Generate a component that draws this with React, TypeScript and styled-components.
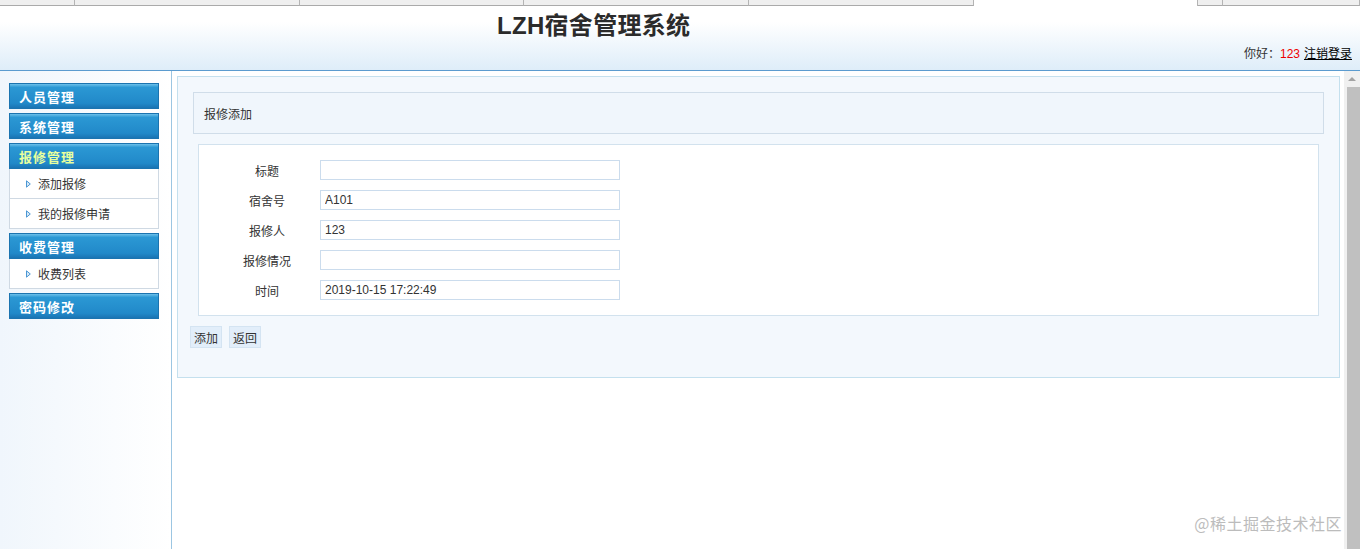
import React from "react";
import styled, { createGlobalStyle } from "styled-components";

const Global = createGlobalStyle`
  html, body { margin: 0; padding: 0; height: 100%; overflow: hidden; }
  body { font-family: "Liberation Sans", "Noto Sans CJK SC", sans-serif; font-size: 12px; color: #333; background: #fff; }
  #root { height: 549px; }
  * { box-sizing: border-box; }
`;

const Page = styled.div`
  height: 549px;
  display: flex;
  flex-direction: column;
  position: relative;
`;

const TabStrip = styled.div`
  display: flex;
  height: 6px;
  flex: none;
`;

const Tab = styled.div<{ $w: number; $active?: boolean }>`
  width: ${(p) => p.$w}px;
  flex: none;
  background: ${(p) => (p.$active ? "#fff" : "#efefef")};
  border-right: 1px solid #b4b4b4;
  border-bottom: ${(p) => (p.$active ? "none" : "1px solid #aaa")};
`;

const Header = styled.header`
  height: 65px;
  flex: none;
  background: linear-gradient(to bottom, #ffffff 25%, #deedf9 100%);
  border-bottom: 1px solid #5b9bcf;
  position: relative;
  display: flex;
  flex-direction: column;
`;

const Title = styled.h1`
  margin: 0;
  padding: 4px 0 0 497px;
  font-family: "Liberation Sans", "Noto Sans CJK SC", sans-serif;
  font-size: 24px;
  font-weight: bold;
  color: #2b2b2b;
  line-height: 32px;
  letter-spacing: 0.3px;
`;

const UserBar = styled.div`
  margin-top: auto;
  padding: 0 8px 8px 0;
  text-align: right;
  font-family: "Noto Sans CJK SC", sans-serif;
  font-size: 12px;
  line-height: 16px;
  color: #333;
`;

const Red = styled.span`
  color: #e00;
  font-family: "Liberation Sans", sans-serif;
`;

const Logout = styled.a`
  color: #000;
  text-decoration: underline;
  margin-left: 4px;
`;

const Body = styled.div`
  flex: 1;
  display: flex;
  min-height: 0;
`;

const Sidebar = styled.nav`
  width: 172px;
  flex: none;
  background: linear-gradient(to right, #f0f6fc, #ffffff);
  border-right: 1px solid #9cc6e2;
  padding: 12px 0 0 9px;
  display: flex;
  flex-direction: column;
`;

const Group = styled.div`
  width: 150px;
  margin-bottom: 4px;
`;

const GroupHead = styled.div<{ $active?: boolean }>`
  height: 26px;
  background: linear-gradient(to bottom, #6cc0ea 0%, #2b98d4 14%, #2189c9 80%, #1a74b3 100%);
  border: 1px solid #1b74b0;
  color: ${(p) => (p.$active ? "#e8ff9e" : "#fff")};
  font-family: "Noto Sans CJK SC", sans-serif;
  font-weight: bold;
  font-size: 13px;
  letter-spacing: 1px;
  padding-left: 9px;
  line-height: 26px;
`;

const SubItem = styled.div`
  height: 30px;
  background: #fff;
  border: 1px solid #cfd9e3;
  border-top: none;
  display: flex;
  align-items: center;
  padding-left: 16px;
  font-family: "Noto Sans CJK SC", sans-serif;
  font-size: 12px;
  color: #333;
  gap: 7px;
`;

const Arrow = () => (
  <svg width="5" height="8" viewBox="0 0 5 8">
    <path d="M0.5 0.8 L4.3 4 L0.5 7.2 Z" fill="#d6e8f6" stroke="#4b97d4" strokeWidth="1" />
  </svg>
);

const Main = styled.main`
  flex: 1;
  padding: 5px 4px 0 5px;
  min-width: 0;
`;

const Panel = styled.section`
  background: #f3f8fd;
  border: 1px solid #c4e0ee;
  padding: 15px 15px 29px 12px;
`;

const PanelHead = styled.div`
  height: 42px;
  margin-left: 3px;
  background: #f0f6fc;
  border: 1px solid #d0dde9;
  padding-left: 10px;
  display: flex;
  align-items: center;
  font-family: "Noto Sans CJK SC", sans-serif;
  font-size: 12px;
  color: #333;
`;

const FormBox = styled.div`
  margin: 10px 5px 10px 8px;
  background: #fff;
  border: 1px solid #d2e2ee;
  padding: 15px 0 15px 15px;
  display: flex;
  flex-direction: column;
  gap: 10px;
`;

const Row = styled.div`
  display: flex;
  align-items: center;
  height: 20px;
`;

const Label = styled.label`
  width: 106px;
  text-align: center;
  font-family: "Noto Sans CJK SC", sans-serif;
  font-size: 12px;
  color: #333;
`;

const Input = styled.input`
  width: 300px;
  height: 20px;
  border: 1px solid #cbdced;
  padding: 0 4px;
  font-family: "Liberation Sans", sans-serif;
  font-size: 12px;
  color: #333;
  background: #fff;
  outline: none;
`;

const Buttons = styled.div`
  display: flex;
  gap: 7px;
`;

const Button = styled.button`
  height: 22px;
  padding: 0 3px;
  background: #e2eefa;
  border: 1px solid #d4e4f2;
  font-family: "Noto Sans CJK SC", sans-serif;
  font-size: 12px;
  color: #333;
  cursor: pointer;
`;

const ScrollBar = styled.div`
  width: 16px;
  flex: none;
  display: flex;
  flex-direction: column;
  background: #f0f0f0;
`;

const ScrollBtn = styled.div`
  height: 16px;
  flex: none;
  display: flex;
  align-items: center;
  justify-content: center;
  background: #f0f0f0;
`;

const UpTri = styled.span`
  width: 0;
  height: 0;
  border-left: 4px solid transparent;
  border-right: 4px solid transparent;
  border-bottom: 4px solid #a3a3a3;
`;

const Thumb = styled.div`
  flex: 1;
  margin: 0 0 0 3px;
  background: #c0c0c0;
`;

const Watermark = styled.div`
  position: absolute;
  right: 18px;
  bottom: 14px;
  font-family: "Noto Sans CJK SC", sans-serif;
  font-size: 16px;
  color: #bcbcbc;
  letter-spacing: 0.5px;
`;

const tabs = [
  { w: 75 },
  { w: 225 },
  { w: 224 },
  { w: 225 },
  { w: 225 },
  { w: 224, active: true },
  { w: 25 },
  { w: 137 },
];

const fields = [
  { label: "标题", value: "" },
  { label: "宿舍号", value: "A101" },
  { label: "报修人", value: "123" },
  { label: "报修情况", value: "" },
  { label: "时间", value: "2019-10-15 17:22:49" },
];

export default function App() {
  return (
    <Page>
      <Global />
      <TabStrip>
        {tabs.map((t, i) => (
          <Tab key={i} $w={t.w} $active={t.active} />
        ))}
      </TabStrip>
      <Header>
        <Title>LZH宿舍管理系统</Title>
        <UserBar>
          你好：<Red>123</Red>
          <Logout href="#">注销登录</Logout>
        </UserBar>
      </Header>
      <Body>
        <Sidebar>
          <Group>
            <GroupHead>人员管理</GroupHead>
          </Group>
          <Group>
            <GroupHead>系统管理</GroupHead>
          </Group>
          <Group>
            <GroupHead $active>报修管理</GroupHead>
            <SubItem>
              <Arrow />
              添加报修
            </SubItem>
            <SubItem>
              <Arrow />
              我的报修申请
            </SubItem>
          </Group>
          <Group>
            <GroupHead>收费管理</GroupHead>
            <SubItem>
              <Arrow />
              收费列表
            </SubItem>
          </Group>
          <Group>
            <GroupHead>密码修改</GroupHead>
          </Group>
        </Sidebar>
        <Main>
          <Panel>
            <PanelHead>报修添加</PanelHead>
            <FormBox>
              {fields.map((f) => (
                <Row key={f.label}>
                  <Label>{f.label}</Label>
                  <Input defaultValue={f.value} />
                </Row>
              ))}
            </FormBox>
            <Buttons>
              <Button>添加</Button>
              <Button>返回</Button>
            </Buttons>
          </Panel>
        </Main>
        <ScrollBar>
          <ScrollBtn>
            <UpTri />
          </ScrollBtn>
          <Thumb />
        </ScrollBar>
      </Body>
      <Watermark>@稀土掘金技术社区</Watermark>
    </Page>
  );
}
